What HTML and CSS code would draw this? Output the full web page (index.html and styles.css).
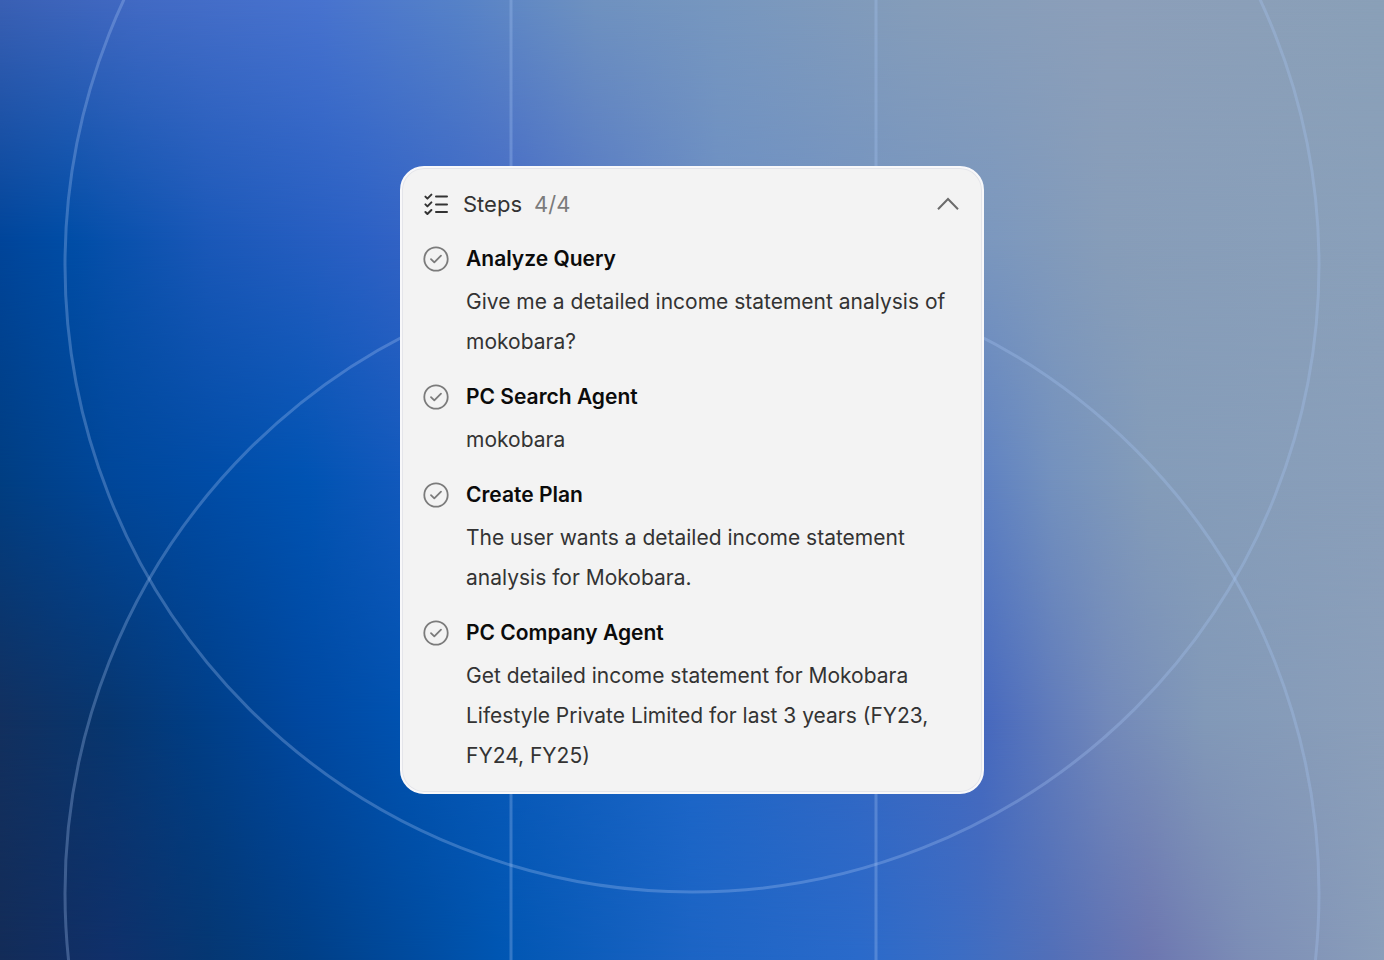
FILE: index.html
```html
<!DOCTYPE html>
<html lang="en">
<head>
    <meta charset="UTF-8">
    <meta name="viewport" content="width=device-width, initial-scale=1.0">
    <title>Steps</title>
    <link rel="stylesheet" href="styles.css">
</head>
<body>
    <div class="backdrop" aria-hidden="true">
        <div class="band band-1"></div>
        <div class="band band-2"></div>
        <div class="band band-3"></div>
        <div class="band band-4"></div>
        <div class="band band-5"></div>
        <svg class="rings" viewBox="0 0 1384 960" preserveAspectRatio="xMidYMid slice">
            <circle cx="692" cy="265" r="627"/>
            <circle cx="692" cy="893" r="627"/>
            <path d="M511 0V960M876 0V960"/>
        </svg>
    </div>

    <svg width="0" height="0" class="sprite" aria-hidden="true">
        <symbol id="check-circle" viewBox="0 0 26 26">
            <circle cx="13" cy="13" r="11.7"/>
            <path d="M8 13.2l3.3 3.2L18 9.6"/>
        </symbol>
    </svg>

    <main class="card">
        <button class="card-header" type="button" aria-expanded="true" aria-controls="steps">
            <svg class="list-icon" viewBox="0 0 26 26" aria-hidden="true">
                <path d="M2.4 5.6l2 2L8.4 3.6M2.4 13.4l2 2 4-4M2.4 21l2 2 4-4M13 5.6h11M13 13.4h11M13 21h11"/>
            </svg>
            <span class="card-title">Steps</span>
            <span class="card-count">4/4</span>
            <svg class="chevron" viewBox="0 0 24 24" aria-hidden="true">
                <path d="M2 17.2L12 7l10 10.2"/>
            </svg>
        </button>

        <ol class="steps" id="steps">
            <li class="step">
                <svg class="check" aria-hidden="true"><use href="#check-circle"/></svg>
                <div class="step-body">
                    <h2>Analyze Query</h2>
                    <p>Give me a detailed income statement analysis of mokobara?</p>
                </div>
            </li>
            <li class="step">
                <svg class="check" aria-hidden="true"><use href="#check-circle"/></svg>
                <div class="step-body">
                    <h2>PC Search Agent</h2>
                    <p>mokobara</p>
                </div>
            </li>
            <li class="step">
                <svg class="check" aria-hidden="true"><use href="#check-circle"/></svg>
                <div class="step-body">
                    <h2>Create Plan</h2>
                    <p>The user wants a detailed income statement analysis for Mokobara.</p>
                </div>
            </li>
            <li class="step">
                <svg class="check" aria-hidden="true"><use href="#check-circle"/></svg>
                <div class="step-body">
                    <h2>PC Company Agent</h2>
                    <p>Get detailed income statement for Mokobara Lifestyle Private Limited for last 3 years (FY23, FY24, FY25)</p>
                </div>
            </li>
        </ol>
    </main>
</body>
</html>
```
FILE: styles.css
```css
:root {
    --card-color: #f3f3f3;
    --title-color: #0b0b0b;
    --text-color: #333333;
    --muted-color: #7b7b7b;
}

* {
    margin: 0;
    padding: 0;
    box-sizing: border-box;
}

body {
    font-family: Inter, "Liberation Sans", sans-serif;
    font-size: 21px;
    color: var(--text-color);
    display: flex;
    justify-content: center;
    align-items: center;
    min-height: 100vh;
}

/* Background: each band fades into the one below it */
.backdrop {
    position: fixed;
    inset: 0;
    z-index: -1;
    overflow: hidden;
}

.band,
.rings {
    position: absolute;
    inset: 0;
    width: 100%;
    height: 100%;
}

.band-1 {
    background: linear-gradient(90deg, #3a60b4 0%, #426ac4 10%, #4873cf 23%, #5682c8 33%, #6f92c0 43%, #7797bf 52%, #859dba 66%, #8c9fba 80%, #8aa0b8 100%);
}

.band-2 {
    background: linear-gradient(90deg, #00459a 0%, #004da6 5%, #1a58b8 15%, #2b60c4 26%, #4469c6 37%, #6c8fc4 52%, #7c98be 72%, #879db9 80%, #8aa0ba 100%);
    mask-image: linear-gradient(transparent 0%, #000 25%);
}

.band-3 {
    background: linear-gradient(90deg, #003e82 0%, #00479a 8%, #004ca6 15%, #0053b2 22%, #1259bc 29%, #5e81c2 71%, #7391be 76%, #849cb9 83%, #8a9fba 100%);
    mask-image: linear-gradient(transparent 25%, #000 50%);
}

.band-4 {
    background: linear-gradient(90deg, #12305f 0%, #07366f 8%, #003f88 15%, #0048a0 22%, #0052b0 29%, #1c66c8 50%, #4668be 71%, #607bbb 76%, #7289ba 80%, #8299b8 87%, #8b9fba 100%);
    mask-image: linear-gradient(transparent 50%, #000 75%);
}

.band-5 {
    background: linear-gradient(90deg, #132c58 0%, #10306a 8%, #053772 15%, #003f86 22%, #004a9c 29%, #0056b2 36%, #1c64c4 50%, #2a6aca 62%, #3b6dc4 69%, #526fb8 76%, #6c76b0 83%, #7c8db6 90%, #8a9eba 100%);
    mask-image: linear-gradient(transparent 75%, #000 100%);
}

.rings {
    fill: none;
    stroke: rgba(170, 198, 245, 0.3);
    stroke-width: 3;
}

.sprite {
    position: absolute;
}

.card {
    width: 584px;
    max-width: 100%;
    padding: 20px 22px 16px 21px;
    background-color: var(--card-color);
    border: 2px solid #f8f8fa;
    border-radius: 24px;
    box-shadow: inset 0 0 0 1px #e4e5ea;
}

.card-header {
    display: flex;
    align-items: center;
    width: 100%;
    margin-bottom: 24px;
    border: none;
    background: none;
    font: inherit;
    line-height: 32px;
    color: var(--text-color);
    cursor: pointer;
}

.list-icon,
.check {
    flex: none;
    width: 26px;
    height: 26px;
    fill: none;
    stroke-linecap: round;
    stroke-linejoin: round;
}

.list-icon {
    margin-right: 14px;
    stroke: var(--text-color);
    stroke-width: 2;
}

.card-title,
.card-count {
    font-size: 22px;
}

.card-count {
    margin-left: 12px;
    color: var(--muted-color);
}

.chevron {
    width: 24px;
    height: 24px;
    margin-left: auto;
    fill: none;
    stroke: #6b6b6b;
    stroke-width: 2;
}

.steps {
    display: flex;
    flex-direction: column;
    gap: 20px;
    list-style: none;
}

.step {
    display: flex;
    gap: 17px;
}

.check {
    margin-top: 2px;
    stroke: var(--muted-color);
    stroke-width: 1.8;
}

.step-body {
    flex: 1;
    min-width: 0;
}

.step h2 {
    margin-bottom: 8px;
    font-size: 21px;
    font-weight: 600;
    line-height: 30px;
    color: var(--title-color);
}

.step p {
    line-height: 40px;
}
```
